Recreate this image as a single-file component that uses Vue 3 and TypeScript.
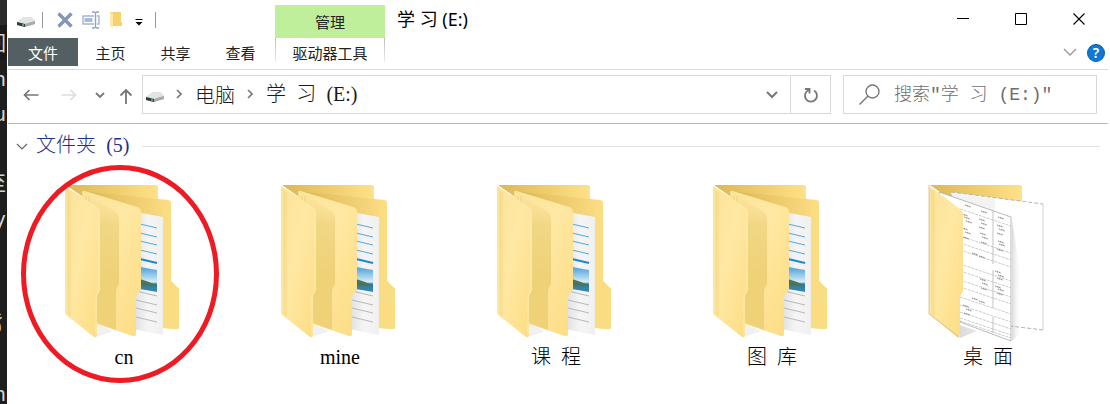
<script setup lang="ts">
interface Segment {
  text: string
  type: 'han' | 'latin' | 'space'
}

interface Folder {
  name: string
  kind: 'nested' | 'sheets'
  marked?: boolean
}

const tabs: string[] = ['主页', '共享', '查看']
const crumbs: string[] = ['电脑', '学 习 (E:)']
const editorLines: string[] = ['回', 'n', 'u', '', '至', 'y', '', '', '豸', '', 'n']

const folders: Folder[] = [
  { name: 'cn', kind: 'nested', marked: true },
  { name: 'mine', kind: 'nested' },
  { name: '课 程', kind: 'nested' },
  { name: '图 库', kind: 'nested' },
  { name: '桌 面', kind: 'sheets' },
]

const blueLines: number[] = [47, 56, 64, 73]
const grayLines: number[] = [115, 124, 132, 141]
const sheetRows: number[] = [46, 73, 80, 87, 101, 108, 117, 124, 134, 142, 149, 155, 158]
const sheetNotes: number[][] = [
  [41, 25], [57, 31], [74, 37],
  [38, 34], [40, 37], [42, 41], [55, 39], [57, 43], [55, 47], [73, 45], [75, 49], [73, 53],
  [38, 48], [41, 52], [39, 57], [56, 53], [58, 57], [57, 62], [74, 61], [75, 64], [73, 69],
  [48, 73], [55, 76], [71, 91], [74, 95], [73, 98], [71, 106], [74, 109], [73, 113],
  [56, 99], [58, 103], [57, 108], [48, 118], [55, 121], [39, 125], [42, 129], [40, 133],
]

function segments(text: string): Segment[] {
  return (text.match(/[\u4e00-\u9fff]+|\s+|[^\u4e00-\u9fff\s]+/g) ?? []).map((part) => ({
    text: part,
    type: /\s/.test(part) ? 'space' : /[\u4e00-\u9fff]/.test(part) ? 'han' : 'latin',
  }))
}
</script>

<template>
  <div class="screen">
    <div class="editor" aria-hidden="true">
      <div v-for="(line, i) in editorLines" :key="i" class="editor-line"><span>{{ line }}</span></div>
    </div>

    <main class="window">
      <svg class="defs" width="0" height="0" aria-hidden="true">
        <defs>
          <linearGradient id="flap" x1="0" y1="0" x2="1" y2="1">
            <stop offset="0" stop-color="#fbe39a" /><stop offset=".45" stop-color="#ffe8a3" /><stop offset="1" stop-color="#fddc82" />
          </linearGradient>
          <linearGradient id="back" x1="0" y1="0" x2="1" y2="0">
            <stop offset="0" stop-color="#dcb755" /><stop offset="1" stop-color="#ffe187" />
          </linearGradient>
          <linearGradient id="fold" gradientUnits="userSpaceOnUse" x1="44" y1="18" x2="36" y2="90">
            <stop offset="0" stop-color="#ecd07a" stop-opacity="0" /><stop offset=".35" stop-color="#ecd07a" stop-opacity=".7" /><stop offset="1" stop-color="#efd278" />
          </linearGradient>
          <linearGradient id="paper" x1="0" y1="0" x2="1" y2="0">
            <stop offset="0" stop-color="#dedede" /><stop offset=".5" stop-color="#f5f5f5" /><stop offset="1" stop-color="#f0f0f0" />
          </linearGradient>
          <linearGradient id="sky" x1="0" y1="0" x2="0" y2="1">
            <stop offset="0" stop-color="#4a9fd8" /><stop offset=".6" stop-color="#d5edf8" /><stop offset=".68" stop-color="#3b7792" /><stop offset="1" stop-color="#348cbd" />
          </linearGradient>
          <linearGradient id="shade" x1="0" y1="0" x2="1" y2="0">
            <stop offset="0" stop-color="#999" stop-opacity=".35" /><stop offset="1" stop-color="#fff" stop-opacity="0" />
          </linearGradient>
          <symbol id="drive" viewBox="0 0 20 12">
            <path d="M1 6 8 1h7l4 4v3l-11 3-7-2z" fill="#c9cbcd" />
            <path d="M1 6 8 1h7l4 4-10 3z" fill="#e1e3e5" />
            <path d="M1 6l8 2v3l-8-2z" fill="#34383a" />
            <path d="M9 8l10-3v3L9 11z" fill="#a8abae" />
            <path d="M6 8h2v2H6z" fill="#36b34a" />
          </symbol>
        </defs>
      </svg>

      <header class="titlebar">
        <div class="quick">
          <svg class="drive" width="20" height="12"><use href="#drive" /></svg>
          <i class="sep"></i>
          <button class="q-delete" aria-label="删除"><svg width="16" height="16" viewBox="0 0 16 16"><path d="M1.500 1.500l13 13M14.500 1.500l-13 13" stroke="#8496b7" stroke-width="3.400" /></svg></button>
          <button class="q-rename" aria-label="重命名">
            <svg width="18" height="18" viewBox="0 0 18 18" fill="none"><path d="M12 5H1v8h11M15 5h2v8h-2" stroke="#a6b5d2" stroke-width="1.400" /><path d="M2.500 7h8v4h-8z" fill="#a6bbdb" /><path d="M10 1h2l1.500 1L15 1h2M13.500 2v14M10 17h2l1.500-1 1.500 1h2" stroke="#8fa0c0" stroke-width="1.400" /></svg>
          </button>
          <button class="q-new" aria-label="新建文件夹">
            <svg width="14" height="18" viewBox="0 0 14 18"><path d="M1 1h11v10h1v4H1z" fill="#f5d170" /><path d="M1 1l3 2v14l-3-2z" fill="#ffe9a8" /></svg>
          </button>
          <button class="q-more" aria-label="自定义快速访问工具栏"><svg width="8" height="8" viewBox="0 0 8 8"><path d="M.5 1.500h7" stroke="#000" /><path d="M.5 4h7L4 7.500z" fill="#000" /></svg></button>
          <i class="sep"></i>
        </div>
        <div class="manage">管理</div>
        <h1>学 习 (E:)</h1>
        <div class="controls">
          <button aria-label="最小化"><svg width="12" height="12" viewBox="0 0 12 12"><path d="M0 5.500h12" stroke="#000" /></svg></button>
          <button aria-label="最大化"><svg width="12" height="12" viewBox="0 0 12 12"><path d="M.5.5h11v11H.5z" fill="none" stroke="#000" /></svg></button>
          <button aria-label="关闭"><svg width="12" height="12" viewBox="0 0 12 12"><path d="M.5.5l11 11M11.500.5l-11 11" stroke="#000" stroke-width="1.100" /></svg></button>
        </div>
      </header>

      <nav class="ribbon">
        <button class="tab file">文件</button>
        <button v-for="tab in tabs" :key="tab" class="tab">{{ tab }}</button>
        <button class="tab context">驱动器工具</button>
        <button class="expand" aria-label="展开功能区"><svg width="14" height="8" viewBox="0 0 14 8"><path d="M1 1l6 6 6-6" fill="none" stroke="#a0a0a0" stroke-width="1.500" /></svg></button>
        <button class="help" aria-label="帮助">?</button>
      </nav>

      <div class="location">
        <div class="travel">
          <button class="t-back" aria-label="后退"><svg width="16" height="12" viewBox="0 0 16 12"><path d="M15.500 6H1.500M6.500 1l-5 5 5 5" fill="none" stroke="#777" stroke-width="1.700" /></svg></button>
          <button class="t-next" aria-label="前进"><svg width="16" height="12" viewBox="0 0 16 12"><path d="M.5 6h14M9.500 1l5 5-5 5" fill="none" stroke="#ddd" stroke-width="1.700" /></svg></button>
          <button class="t-recent" aria-label="最近的位置"><svg width="10" height="6" viewBox="0 0 10 6"><path d="M1 1l4 4 4-4" fill="none" stroke="#777" stroke-width="1.800" /></svg></button>
          <button class="t-up" aria-label="上移"><svg width="14" height="16" viewBox="0 0 14 16"><path d="M7 16V2M1.500 7.500 7 2l5.500 5.500" fill="none" stroke="#777" stroke-width="1.800" /></svg></button>
        </div>
        <div class="address">
          <svg class="drive" width="20" height="12"><use href="#drive" /></svg>
          <template v-for="crumb in crumbs" :key="crumb">
            <svg class="arrow" width="6" height="10" viewBox="0 0 6 10"><path d="M1 1l4 4-4 4" fill="none" stroke="#777" stroke-width="1.600" /></svg>
            <a href="#" class="song"><span v-for="(s, i) in segments(crumb)" :key="i" :class="s.type">{{ s.text }}</span></a>
          </template>
          <button class="drop" aria-label="历史记录"><svg width="12" height="8" viewBox="0 0 12 8"><path d="M1 1l5 5 5-5" fill="none" stroke="#777" stroke-width="2" /></svg></button>
          <button class="refresh" aria-label="刷新"><svg width="16" height="16" viewBox="0 0 16 16"><path d="M11 3.500a6 6 0 1 1-5.500-.3M2 2h4.500v4.500" fill="none" stroke="#777" stroke-width="1.800" /></svg></button>
        </div>
        <label class="search">
          <svg width="21" height="21" viewBox="0 0 21 21"><circle cx="13.500" cy="7.500" r="6.500" fill="none" stroke="#777" stroke-width="1.400" /><path d="M9 12l-8.500 8.500" stroke="#777" stroke-width="1.400" /></svg>
          <input type="text" aria-label="搜索" placeholder="搜索&quot;学 习 (E:)&quot;" />
        </label>
      </div>

      <section class="content">
        <h2 class="group">
          <button aria-label="折叠"><svg width="12" height="7" viewBox="0 0 12 7"><path d="M1 1l5 5 5-5" fill="none" stroke="#666" stroke-width="1.200" /></svg></button>
          <span class="song"><span v-for="(s, i) in segments('文件夹 (5)')" :key="i" :class="s.type">{{ s.text }}</span></span>
        </h2>
        <ul class="grid">
          <li v-for="folder in folders" :key="folder.name" class="item">
            <svg v-if="folder.kind === 'nested'" class="folder" width="128" height="164" viewBox="0 0 128 164">
              <path d="M37 144v13l16-6z" fill="#f1f1f1" />
              <path d="M6 5h90q2 0 2 2v30L23 17z" fill="url(#back)" />
              <path d="M23 11l85 9q3 0 3 3v78l8 8v38q0 2-2 2l-15-1-22-10z" fill="url(#back)" />
              <path d="M103 25h8v76l8 8v38q0 2-2 2l-14-1z" fill="#fadd83" />
              <path d="M76 32l27 5v118l-30-6z" fill="url(#paper)" />
              <path v-for="y in blueLines" :key="y" :d="`M80 ${y - 3}l17 4`" stroke="#55aadf" />
              <path d="M80 79l17 4" stroke="#168bd1" stroke-width="2" />
              <path d="M80 87l17 3v22l-17-3z" fill="url(#sky)" />
              <path d="M80 99q8 2 17 7l-17-1z" fill="#4c7357" />
              <path v-for="y in grayLines" :key="y" :d="`M76 ${y - 4}l21 5`" stroke="#b8b8b8" />
              <path d="M22 13q0-3 3-2l52 16q4 1 4 5v77l-5 7v37q0 4-3 3l-36-12z" fill="url(#flap)" />
              <path d="M26 16v6M29 16v9" fill="none" stroke="#efd17a" />
              <path d="M28 14l28 18q3 2 3 8v64l-3 6v40l-20-7z" fill="url(#fold)" />
              <path d="M5 6l32 21q3 2 3 6v77l-3 6v38q0 4-3 3L5 134z" fill="url(#flap)" />
              <path d="M8 10v125M10 12v125" stroke="#efd17a" stroke-width=".7" />
              <path d="M39 32v79l-3 5v38" fill="none" stroke="#fff0bd" stroke-width=".8" />
            </svg>
            <svg v-else class="folder" width="128" height="164" viewBox="0 0 128 164">
              <path d="M119 138l14 4-14 8zM36 145v13l17-7z" fill="url(#shade)" />
              <path d="M6 5h90q2 0 2 2v30L23 17z" fill="url(#back)" />
              <path d="M27 12l92 12v126l-33-4z" fill="#fff" />
              <path d="M27 12l92 12M119 150l-33-4" stroke="#aaa" stroke-width=".9" stroke-dasharray="4 2" />
              <path d="M119 24v126" stroke="#d4d4d4" />
              <path d="M27 13l44 6v25L30 20z" fill="#f3f3f3" />
              <path d="M88 40l8 50 2 62-10 9z" fill="url(#shade)" />
              <path d="M15 12l72 25v124l-51-19z" fill="#fff" stroke="#aaa" stroke-width=".8" />
              <path v-for="y in sheetRows" :key="y" :d="`M36 ${y - 17}l51 17`" stroke="#aaa" stroke-width=".6" stroke-dasharray="3 1" />
              <path d="M69 31v53M69 90v38M69 137v16" stroke="#aaa" stroke-width=".7" />
              <path v-for="(n, i) in sheetNotes" :key="i" :d="`M${n[0]} ${n[1]}l6 2`" stroke="#888" stroke-width="1.100" stroke-dasharray="1 .6 2 .5" />
              <path d="M5 6l31 23q3 2 3 6v76l-3 6v38q0 4-3 2L5 134z" fill="url(#flap)" />
              <path d="M8 10v125M10 12v125" stroke="#efd17a" stroke-width=".7" />
              <path d="M5 5v129l30 23" fill="none" stroke="#c4b585" stroke-width=".7" />
            </svg>
            <span class="song label"><span v-for="(s, i) in segments(folder.name)" :key="i" :class="s.type">{{ s.text }}</span></span>
            <i v-if="folder.marked" class="mark"></i>
          </li>
        </ul>
      </section>
    </main>
  </div>
</template>

<style>
body {
  background: #fff;
}
</style>

<style scoped>
* {
  box-sizing: border-box;
}
.screen {
  display: flex;
  min-height: 100vh;
  overflow: hidden;
  font-family: "Noto Sans", "Noto Sans CJK SC", sans-serif;
  font-size: 15px;
  color: #222;
}
.editor {
  flex: none;
  width: 7px;
  max-height: 100vh;
  padding-top: 26px;
  overflow: hidden;
  background: linear-gradient(#2a2a2a 25px, #191919 25px, #191919 60px, #1e1e1e 60px);
  color: #d4d4d4;
  font: 20px "DejaVu Sans Mono", "Noto Sans CJK SC", monospace;
}
.editor-line {
  display: flex;
  justify-content: flex-end;
  height: 35px;
  padding-right: 1px;
  line-height: 36px;
}
.window {
  flex: 1;
  min-width: 0;
  padding: 0 2px 0 1px;
  background: #fff;
}
.defs {
  position: absolute;
}
button {
  display: flex;
  align-items: center;
  justify-content: center;
  padding: 0;
  border: 0;
  background: none;
  color: inherit;
  font: inherit;
}
svg {
  display: block;
  flex: none;
}
.titlebar {
  display: flex;
  height: 38px;
}
.quick {
  display: flex;
  align-items: center;
  width: 267px;
  padding: 2px 0 0 8px;
}
.quick .drive {
  margin-top: 4px;
}
.sep {
  width: 1px;
  height: 16px;
  margin-left: 6px;
  background: #999;
}
.q-delete {
  margin-left: 14px;
}
.q-rename {
  margin-left: 9px;
}
.q-new {
  margin-left: 9px;
}
.q-more {
  margin: 3px 6px 0 12px;
}
.manage {
  width: 110px;
  margin-top: 5px;
  background: #c0ef9b;
  line-height: 34px;
  text-align: center;
}
h1 {
  margin: 0 0 0 12px;
  color: #000;
  font-size: 18px;
  font-weight: 400;
  line-height: 38px;
}
.controls {
  display: flex;
  margin-left: auto;
}
.controls button {
  width: 58px;
}
.ribbon {
  display: flex;
  height: 32px;
  padding-bottom: 3px;
  border-bottom: 1px solid #dadbdc;
}
.tab {
  width: 65px;
  height: 28px;
}
.tab.file {
  width: 70px;
  background: #535f63;
  color: #fff;
}
.tab.context {
  width: 110px;
  height: 24px;
  margin-left: 2px;
  padding-top: 4px;
  border: 1px solid;
  border-width: 0 1px;
  border-image: linear-gradient(#bbb, #eee) 1;
}
.expand {
  margin-left: auto;
  width: 14px;
}
.help {
  align-self: center;
  width: 18px;
  height: 18px;
  margin: 2px 3px 0 10px;
  border: 1px solid #0a5ea8;
  border-radius: 50%;
  background: #0f78d4;
  color: #fff;
  font-size: 14px;
  font-weight: 600;
  line-height: 16px;
}
.location {
  display: flex;
  height: 54px;
  padding: 5px 11px 9px 0;
  border-bottom: 1px solid #b8b8b8;
}
.travel {
  display: flex;
  align-items: center;
  width: 134px;
  padding-left: 15px;
}
.t-next {
  margin-left: 22px;
}
.t-recent {
  margin-left: 18px;
}
.t-up {
  margin: 3px 0 0 14px;
}
.address {
  display: flex;
  flex: 1;
  align-items: center;
  border: 1px solid #d9d9d9;
}
.address .drive {
  margin: 5px 0 0 2px;
}
.arrow {
  margin: 0 13px 2px 11px;
}
.song + .arrow {
  margin-left: 12px;
}
a {
  color: inherit;
  text-decoration: none;
}
.song {
  color: #1a1a1a;
  font-family: "Noto Sans CJK SC", sans-serif;
  font-size: 20px;
  font-weight: 300;
  line-height: 24px;
  white-space: pre;
}
.latin {
  font-family: "Liberation Serif", serif;
}
.space {
  font-family: "Liberation Mono", monospace;
  font-size: 17px;
}
.drop {
  width: 36px;
  height: 100%;
  margin-left: auto;
}
.refresh {
  width: 40px;
  height: 100%;
  border-left: 1px solid #d9d9d9;
}
.search {
  display: flex;
  align-items: center;
  width: 254px;
  margin-left: 12px;
  padding-left: 15px;
  border: 1px solid #d9d9d9;
}
input {
  flex: 1;
  min-width: 0;
  margin-left: 14px;
  padding: 0;
  border: 0;
  outline: 0;
  background: none;
  font: 300 18px "Liberation Mono", "Noto Sans CJK SC", monospace;
}
input::placeholder {
  color: #6d6d6d;
  opacity: 1;
}
.group {
  display: flex;
  align-items: center;
  height: 44px;
  margin: 0;
  padding: 0 8px;
}
.group .song {
  margin: 0 12px 0 8px;
  color: #1e3287;
}
.group::after {
  flex: 1;
  height: 1px;
  background: #e2e2e2;
  content: "";
}
.grid {
  display: grid;
  grid-template-columns: repeat(auto-fill, 216px);
  margin: 0;
  padding: 0 0 0 8px;
  list-style: none;
}
.item {
  position: relative;
  display: flex;
  flex-direction: column;
  align-items: center;
  padding-top: 12px;
}
.folder {
  overflow: visible;
}
.label {
  color: #000;
}
.mark {
  position: absolute;
  top: -3px;
  left: 5px;
  width: 198px;
  height: 218px;
  border: 5px solid #ed1c24;
  border-radius: 50%;
}
</style>
